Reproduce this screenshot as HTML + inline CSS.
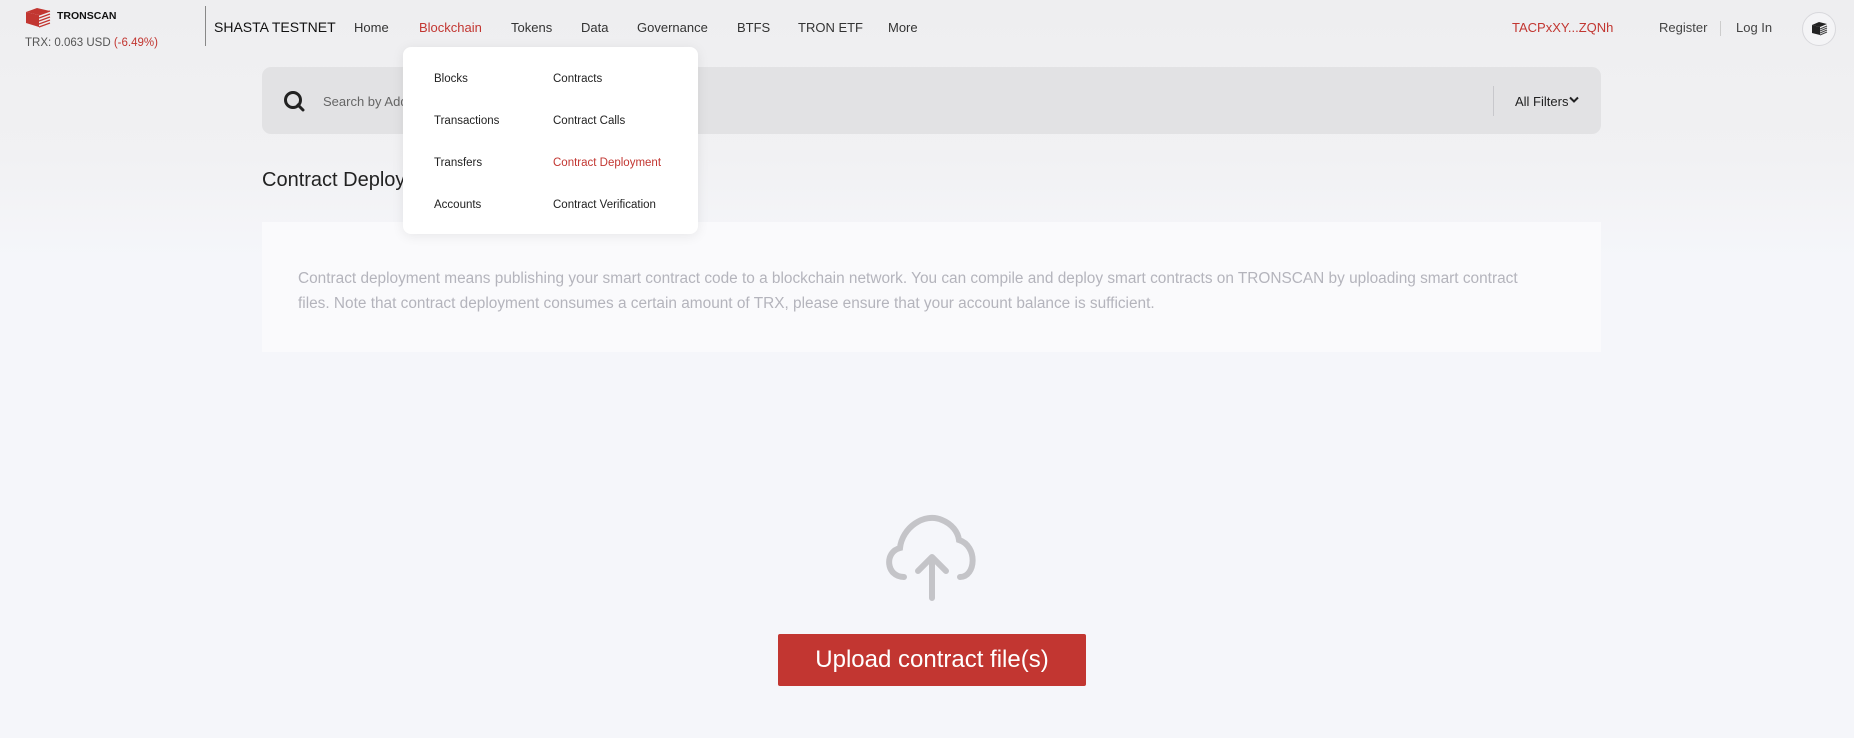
<!DOCTYPE html>
<html><head><meta charset="utf-8"><style>
*{margin:0;padding:0;box-sizing:border-box}
body{width:1854px;height:738px;overflow:hidden;font-family:"Liberation Sans",sans-serif;background:#f5f6fa;position:relative;color:#333}
.bg{position:absolute;left:0;top:0;width:1854px;height:260px;background:linear-gradient(180deg,#eeeef0 0%,#f1f1f3 60%,#f5f6fa 100%)}
.a{position:absolute;white-space:nowrap}
.nav{top:20px;font-size:13px;color:#333}
.dd{position:absolute;left:403px;top:47px;width:295px;height:187px;background:#fff;border-radius:8px;box-shadow:0 2px 12px rgba(0,0,0,.08)}
.dd span{position:absolute;font-size:11.5px;color:#222;white-space:nowrap}
</style></head><body>
<div class="bg"></div>
<svg class="a" style="left:25px;top:7px" width="26" height="21" viewBox="0 0 26 21"><path d="M1 5 L12 1 L25 4 L14 8 Z" fill="#c23631"/><path d="M1 5 L14 8 L14 20 L1 16 Z" fill="#c23631"/><path d="M14 8 L25 4 M14 11 L25 7 M14 14 L25 10 M14 17 L25 13 M14 20 L25 16" stroke="#c23631" stroke-width="1.2" fill="none"/></svg>
<div class="a" style="left:57px;top:10px;font-size:10.5px;font-weight:bold;color:#111">TRONSCAN</div>
<div class="a" style="left:25px;top:37px;font-size:11.5px;color:#555">TRX: 0.063 USD <span style="color:#c23631">(-6.49%)</span></div>
<div class="a" style="left:205px;top:6px;width:1px;height:40px;background:#888"></div>
<div class="a nav" style="left:214px;color:#111;font-size:14px;top:19px">SHASTA TESTNET</div>
<div class="a nav" style="left:354px">Home</div>
<div class="a nav" style="left:419px;color:#c23631">Blockchain</div>
<div class="a nav" style="left:511px">Tokens</div>
<div class="a nav" style="left:581px">Data</div>
<div class="a nav" style="left:637px">Governance</div>
<div class="a nav" style="left:737px">BTFS</div>
<div class="a nav" style="left:798px">TRON ETF</div>
<div class="a nav" style="left:888px">More</div>
<div class="a nav" style="left:1512px;color:#c23631">TACPxXY...ZQNh</div>
<div class="a nav" style="left:1659px;color:#444">Register</div>
<div class="a" style="left:1720px;top:21px;width:1px;height:15px;background:#ccc"></div>
<div class="a nav" style="left:1736px;color:#444">Log In</div>
<div class="a" style="left:1802px;top:12px;width:34px;height:34px;border-radius:50%;border:1px solid #d8d8dc;background:#f4f4f6"></div>
<svg class="a" style="left:1811px;top:21px" width="17" height="15" viewBox="0 0 17 15"><path d="M1 4 L8 1 L16 3 L9 6 Z" fill="#222"/><path d="M1 4 L9 6 L9 14 L1 12 Z" fill="#222"/><path d="M9 8 L16 5 M9 10 L16 7 M9 12 L16 9 M9 14 L16 11" stroke="#444" stroke-width="1"/></svg>

<div class="a" style="left:262px;top:67px;width:1339px;height:67px;background:#e2e2e4;border-radius:9px"></div>
<svg class="a" style="left:283px;top:90px" width="22" height="22" viewBox="0 0 22 22"><circle cx="10" cy="10" r="7.5" stroke="#222" stroke-width="3" fill="none"/><path d="M15 15 L20 20" stroke="#222" stroke-width="3" stroke-linecap="round"/></svg>
<div class="a" style="left:323px;top:94px;font-size:13px;color:#666">Search by Address</div>
<div class="a" style="left:1493px;top:86px;width:1px;height:30px;background:#c8c8cc"></div>
<div class="a" style="left:1515px;top:94px;font-size:13px;color:#222">All Filters</div>
<svg class="a" style="left:1569px;top:96px" width="10" height="8" viewBox="0 0 10 8"><path d="M1 1.5 L5 5.5 L9 1.5" stroke="#222" stroke-width="2" fill="none"/></svg>

<div class="a" style="left:262px;top:169px;font-size:20px;color:#222">Contract Deployment</div>
<div class="a" style="left:262px;top:222px;width:1339px;height:130px;background:#fafafc"></div>
<div class="a" style="left:298px;top:266px;width:1250px;white-space:normal;font-size:15.4px;line-height:25px;color:#b4b4bc">Contract deployment means publishing your smart contract code to a blockchain network. You can compile and deploy smart contracts on TRONSCAN by uploading smart contract files. Note that contract deployment consumes a certain amount of TRX, please ensure that your account balance is sufficient.</div>

<div class="dd">
<span style="left:31px;top:26px">Blocks</span><span style="left:150px;top:26px">Contracts</span>
<span style="left:31px;top:68px">Transactions</span><span style="left:150px;top:68px">Contract Calls</span>
<span style="left:31px;top:110px">Transfers</span><span style="left:150px;top:110px;color:#c23631">Contract Deployment</span>
<span style="left:31px;top:152px">Accounts</span><span style="left:150px;top:152px">Contract Verification</span>
</div>

<svg class="a" style="left:880px;top:510px" width="104" height="94" viewBox="0 0 104 94"><path d="M24 67 C6 67 4 42 20 38 C22 18 44 2 62 10 C72 14 78 22 79 30 C98 36 96 67 80 67" stroke="#c4c4c8" stroke-width="6" fill="none" stroke-linecap="round"/><path d="M52 88 L52 47 M38 61 L52 47 L66 61" stroke="#c4c4c8" stroke-width="6" fill="none" stroke-linecap="round" stroke-linejoin="round"/></svg>
<div class="a" style="left:778px;top:634px;width:308px;height:52px;background:#c23631;border-radius:2px;color:#fff;font-size:24px;text-align:center;line-height:52px">Upload contract file(s)</div>
</body></html>
